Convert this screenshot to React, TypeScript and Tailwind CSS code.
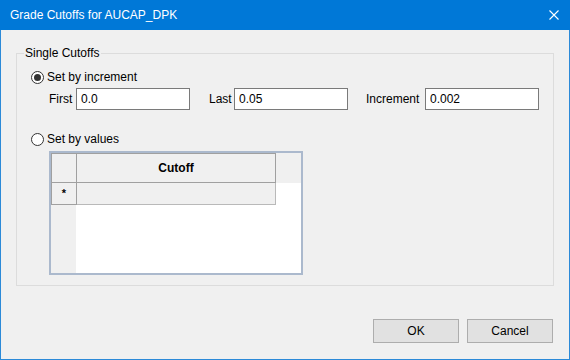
import { useState } from 'react';

const font = { fontFamily: '"Segoe UI", "Liberation Sans", Arial, sans-serif' };

function Radio({ checked, label, onClick }: { checked: boolean; label: string; onClick: () => void }) {
  return (
    <div className="flex items-center h-[14px] ml-[14px] cursor-default" onClick={onClick}>
      <span className="w-[13px] h-[13px] rounded-full border border-[#333333] bg-white flex items-center justify-center">
        {checked && <span className="w-[7px] h-[7px] rounded-full bg-[#333333]" />}
      </span>
      <span className="ml-[3px] text-[12px] leading-[14px] text-black">{label}</span>
    </div>
  );
}

function Field({ label, labelW, value, gap }: { label: string; labelW: string; value: string; gap: string }) {
  return (
    <div className={`flex items-center ${gap}`}>
      <span className={`${labelW} text-[12px] leading-[14px] text-black`}>{label}</span>
      <input
        defaultValue={value}
        className="w-[114px] h-[22px] border border-[#7a7a7a] bg-white pl-[4px] text-[12px] text-black outline-none"
      />
    </div>
  );
}

export default function App() {
  const [mode, setMode] = useState<'inc' | 'val'>('inc');

  return (
    <div className="w-[570px] h-[360px] flex flex-col bg-[#f0f0f0] overflow-hidden" style={font}>
      {/* Title bar */}
      <div className="h-[30px] bg-[#0078d7] flex items-center justify-between pl-[10px] pr-[11px] shrink-0">
        <span className="text-white text-[12px]">Grade Cutoffs for AUCAP_DPK</span>
        <svg width="10" height="10" viewBox="0 0 10 10">
          <path d="M0.5 0.5 L9.5 9.5 M9.5 0.5 L0.5 9.5" stroke="#ffffff" strokeWidth="1.1" />
        </svg>
      </div>

      {/* Body */}
      <div className="flex-1 border-x border-b border-[#2b8ad8] flex flex-col">
        {/* Group box */}
        <div className="mt-[23px] ml-[15px] w-[538px] h-[233px] border border-[#dcdcdc] flex flex-col">
          <span className="-mt-[8px] ml-[7px] px-[1px] w-fit bg-[#f0f0f0] text-[12px] leading-[14px] text-black">
            Single Cutoffs
          </span>

          <div className="mt-[10px]">
            <Radio checked={mode === 'inc'} label="Set by increment" onClick={() => setMode('inc')} />
          </div>

          <div className="mt-[4px] ml-[32px] flex items-center">
            <Field label="First" labelW="w-[27px]" value="0.0" gap="" />
            <Field label="Last" labelW="w-[25px]" value="0.05" gap="ml-[19px]" />
            <Field label="Increment" labelW="w-[59px]" value="0.002" gap="ml-[18px]" />
          </div>

          <div className="mt-[22px]">
            <Radio checked={mode === 'val'} label="Set by values" onClick={() => setMode('val')} />
          </div>

          {/* Grid */}
          <div className="mt-[5px] ml-[32px] w-[254px] h-[124px] border-2 border-[#abb9cd] bg-white flex flex-col">
            <div className="flex bg-[#f0f0f0]">
              <div className="w-[26px] h-[30px] border border-[#a0a0a0]" />
              <div className="w-[199px] h-[30px] border-y border-r border-[#a0a0a0] flex items-center justify-center text-[12px] font-bold text-black">
                Cutoff
              </div>
            </div>
            <div className="flex">
              <div className="w-[26px] h-[22px] border-x border-b border-[#a0a0a0] bg-[#f0f0f0] flex items-center justify-center text-[11px] font-bold text-black">
                *
              </div>
              <div className="w-[199px] h-[22px] border-r border-b border-[#b9b9b9] bg-[#f0f0f0]" />
            </div>
            <div className="flex-1 flex">
              <div className="w-[25px] bg-[#f0f0f0]" />
            </div>
          </div>
        </div>

        {/* Buttons */}
        <div className="mt-[33px] ml-[15px] w-[537px] flex justify-end gap-[8px]">
          <button className="w-[86px] h-[24px] bg-[#e1e1e1] border border-[#adadad] text-[12px] text-black">OK</button>
          <button className="w-[86px] h-[24px] bg-[#e1e1e1] border border-[#adadad] text-[12px] text-black">Cancel</button>
        </div>
      </div>
    </div>
  );
}
